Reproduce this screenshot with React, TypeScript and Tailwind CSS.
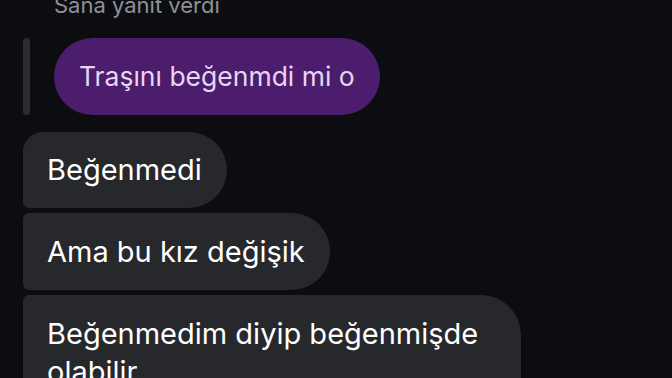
import React from 'react';

const font = { fontFamily: 'Inter, "Noto Sans", sans-serif' };

export default function App() {
  return (
    <div className="h-[378px] w-full overflow-hidden bg-[#0b0d11]" style={font}>
      <div className="-mt-[7px] pl-[54px] text-[22px] leading-[24px] text-[#8d9096]">
        Sana yanıt verdi
      </div>

      <div className="mt-[21px] flex pl-[23px]">
        <div className="w-[7px] rounded-full bg-[#2b2d32]" />
        <div className="ml-[24px] flex h-[77px] items-center rounded-full bg-[#4b1d6c] pl-[25px] pr-[25px] text-[26.5px] text-[#e6d6f2]">
          Traşını beğenmdi mi o
        </div>
      </div>

      <div className="mt-[17px] flex flex-col items-start gap-[5px] pl-[23px]">
        <div className="flex h-[76px] items-center rounded-tl-[20px] rounded-bl-[6px] rounded-r-[38px] bg-[#26282c] pl-[24px] pr-[25px] text-[29px] text-white">
          Beğenmedi
        </div>
        <div className="flex h-[77px] items-center rounded-l-[6px] rounded-r-[38px] bg-[#26282c] pl-[24px] pr-[25px] text-[29px] text-white">
          Ama bu kız değişik
        </div>
        <div className="w-[498px] rounded-tl-[6px] rounded-tr-[40px] bg-[#26282c] pl-[24px] pr-[24px] pt-[20px] pb-[20px] text-[29px] leading-[38px] text-white">
          Beğenmedim diyip beğenmişde olabilir
        </div>
      </div>
    </div>
  );
}
